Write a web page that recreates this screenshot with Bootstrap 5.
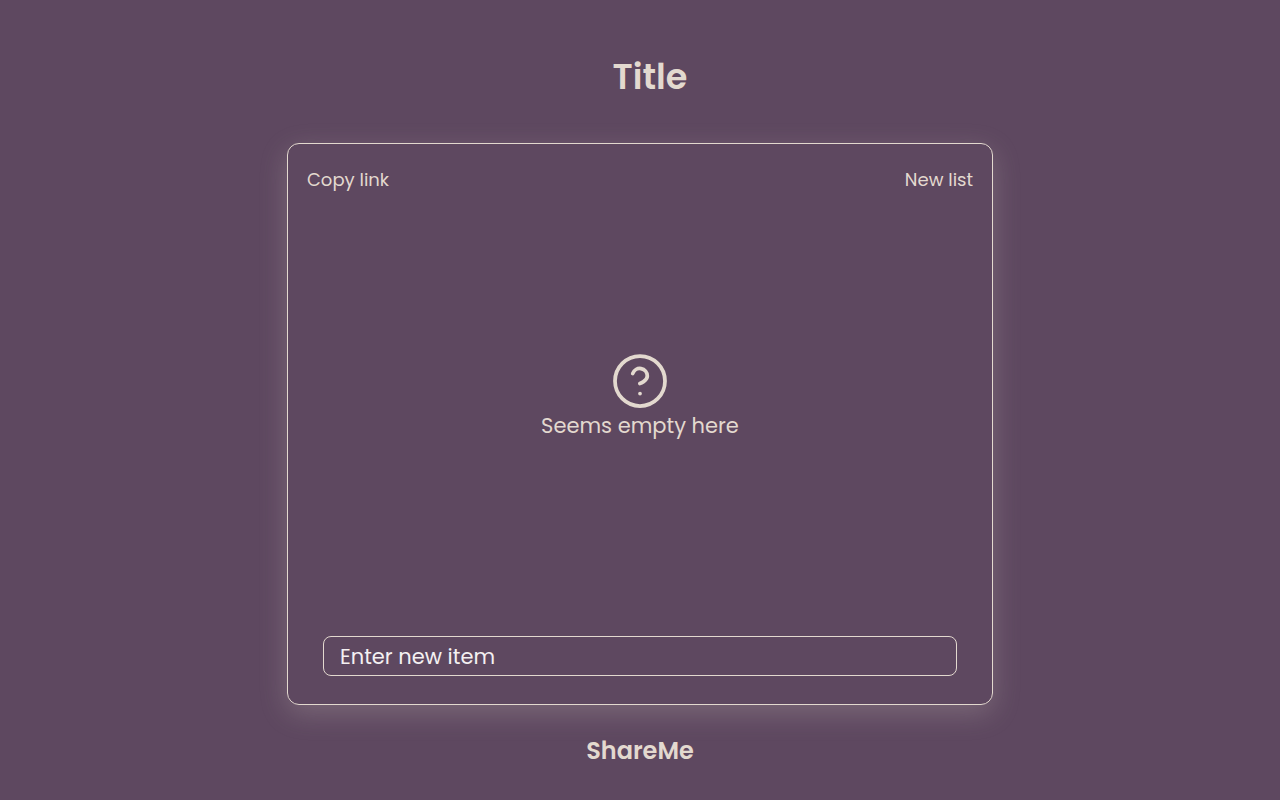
<!DOCTYPE html>
<html lang="en">
<head>
<meta charset="utf-8">
<meta name="viewport" content="width=device-width, initial-scale=1">
<title>ShareMe</title>
<link href="https://cdn.jsdelivr.net/npm/bootstrap@5.3.0/dist/css/bootstrap.min.css" rel="stylesheet">
<style>
:root { --plum: #5e4860; --cream: #e3d9cf; }
body { background: var(--plum); color: var(--cream); font-family: Poppins, Inter, "Liberation Sans", sans-serif; }
.page-title { font-size: 35px; line-height: 54px; font-weight: 600; margin: 50px 0 39px; padding-left: 20px; }
.panel { width: 55.16%; min-width: 300px; min-height: 562px; border: 1px solid var(--cream); border-radius: 12px; box-shadow: 0 8px 28px rgba(227, 217, 207, .22); padding: 22px 19px 28px; }
.text-action { background: none; border: 0; padding: 0; color: var(--cream); font-size: 18px; line-height: 27px; }
.empty-area { padding-bottom: 38px; }
.empty-note { font-size: 21px; line-height: 30px; }
.item-input, .item-input:focus { height: 40px; background: transparent; border: 1px solid var(--cream); border-radius: 8px; color: #f4f0f2; font-size: 21px; padding: 4px 16px; }
.item-input::placeholder { color: #f4f0f2; opacity: 1; }
.brand-name { font-size: 24px; line-height: 36px; font-weight: 600; margin-top: 28px; }
</style>
</head>
<body class="min-vh-100 d-flex flex-column align-items-center">
<h1 class="page-title">Title</h1>
<main class="panel d-flex flex-column">
  <div class="d-flex justify-content-between">
    <button type="button" class="text-action">Copy link</button>
    <button type="button" class="text-action">New list</button>
  </div>
  <div class="empty-area flex-grow-1 d-flex flex-column align-items-center justify-content-center">
    <svg width="60" height="60" viewBox="0 0 24 24" fill="none" stroke="currentColor" stroke-width="1.5" stroke-linecap="round" stroke-linejoin="round" aria-hidden="true"><circle cx="12" cy="12" r="10"/><path d="M9.09 9a3 3 0 0 1 5.83 1c0 2-3 3-3 3M12 17h.01"/></svg>
    <p class="empty-note mb-0">Seems empty here</p>
  </div>
  <form class="px-3"><input class="form-control item-input" type="text" aria-label="New item" placeholder="Enter new item"></form>
</main>
<footer class="brand-name">ShareMe</footer>
<script src="https://cdn.jsdelivr.net/npm/bootstrap@5.3.0/dist/js/bootstrap.bundle.min.js"></script>
</body>
</html>
